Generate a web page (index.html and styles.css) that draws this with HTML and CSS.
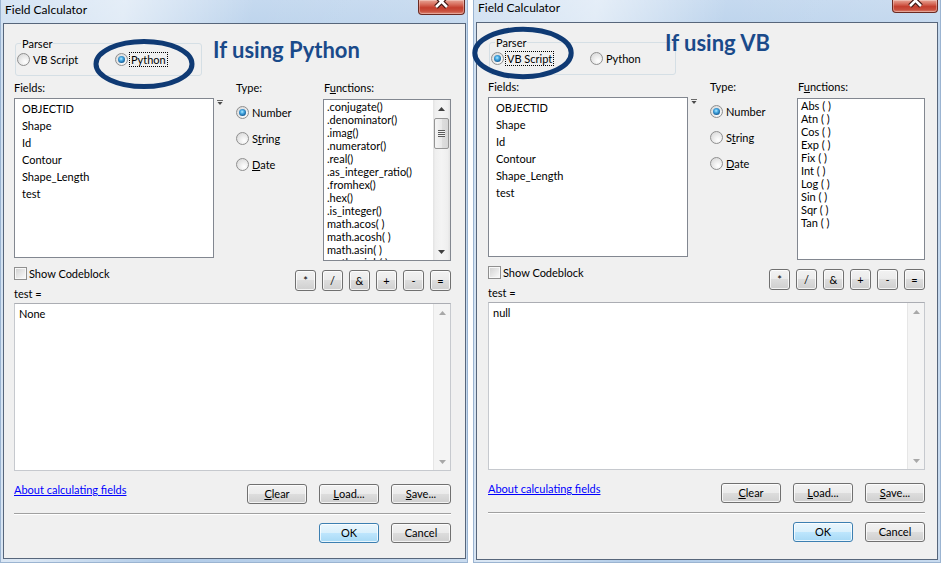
FILE: index.html
```html
<!DOCTYPE html>
<html lang="en">
<head>
<meta charset="utf-8">
<title>Field Calculator</title>
<link rel="stylesheet" href="styles.css">
</head>
<body>
<div class="desk">
  <section class="win win-left">
    <header class="titlebar">
      <span class="title">Field Calculator</span>
      <span class="close"><svg class="close-x" width="45" height="14" viewBox="0 0 45 14"><path class="x-out" d="M17 -4 L28 7 M28 -4 L17 7"/><path class="x-in" d="M17 -4 L28 7 M28 -4 L17 7"/></svg></span>
    </header>
    <div class="client">
      <div class="group">
        <span class="legend">Parser</span>
        <div class="group-opts">
          <span class="opt opt-first"><span class="radio"></span><span class="gtxt">VB Script</span></span>
          <span class="opt"><span class="radio on"></span><span class="gtxt focus">Python</span></span>
        </div>
      </div>
      <div class="cols labels">
        <span class="c-fields">Fields:</span>
        <span class="c-gap"></span>
        <span class="c-type">Type:</span>
        <span class="c-func">F<u>u</u>nctions:</span>
      </div>
      <div class="cols main">
        <ul class="list fields">
          <li>OBJECTID</li>
          <li>Shape</li>
          <li>Id</li>
          <li>Contour</li>
          <li>Shape_Length</li>
          <li>test</li>
        </ul>
        <span class="c-gap"><svg class="sort" width="6" height="6" viewBox="0 0 6 6"><path d="M0 0.5H6" stroke="#6a6a6a" stroke-width="1"/><path d="M0.5 2H5.5L3 5Z" fill="#4a4a4a"/></svg></span>
        <div class="c-type types">
          <span class="opt"><span class="radio on"></span><span>Number</span></span>
          <span class="opt"><span class="radio"></span><span>S<u>t</u>ring</span></span>
          <span class="opt"><span class="radio"></span><span><u>D</u>ate</span></span>
        </div>
        <div class="list funcs">
          <ul class="func-items">
            <li>.conjugate()</li>
            <li>.denominator()</li>
            <li>.imag()</li>
            <li>.numerator()</li>
            <li>.real()</li>
            <li>.as_integer_ratio()</li>
            <li>.fromhex()</li>
            <li>.hex()</li>
            <li>.is_integer()</li>
            <li>math.acos( )</li>
            <li>math.acosh( )</li>
            <li>math.asin( )</li>
            <li>math.asinh( )</li>
          </ul>
          <div class="sbar">
            <span class="sb-btn"><svg width="7" height="4" viewBox="0 0 7 4"><path d="M0 4H7L3.5 0Z" fill="#404040"/></svg></span>
            <span class="sb-track"><span class="thumb"><span class="grip"></span></span></span>
            <span class="sb-btn"><svg width="7" height="4" viewBox="0 0 7 4"><path d="M0 0H7L3.5 4Z" fill="#404040"/></svg></span>
          </div>
        </div>
      </div>
      <div class="cols mid">
        <div class="mid-left">
          <span class="check-row"><span class="check"></span><span>Show Codeblock</span></span>
          <span>test =</span>
        </div>
        <div class="ops">
          <span class="btn op">*</span>
          <span class="btn op">/</span>
          <span class="btn op">&amp;</span>
          <span class="btn op">+</span>
          <span class="btn op">-</span>
          <span class="btn op">=</span>
        </div>
      </div>
      <div class="expr">
        <div class="expr-text">None</div>
        <div class="sbar dis">
          <span class="sb-btn"><svg width="7" height="4" viewBox="0 0 7 4"><path d="M0 4H7L3.5 0Z" fill="#a8a8a8"/></svg></span>
          <span class="sb-track"></span>
          <span class="sb-btn"><svg width="7" height="4" viewBox="0 0 7 4"><path d="M0 0H7L3.5 4Z" fill="#a8a8a8"/></svg></span>
        </div>
      </div>
      <div class="cols actions">
        <a class="link" href="#">About calculating fields</a>
        <div class="btns">
          <span class="btn w60"><u>C</u>lear</span>
          <span class="btn w60"><u>L</u>oad...</span>
          <span class="btn w60"><u>S</u>ave...</span>
        </div>
      </div>
      <div class="sep"></div>
      <div class="btns final">
        <span class="btn w60 default">OK</span>
        <span class="btn w60">Cancel</span>
      </div>
    </div>
    <svg class="ring ring-l" width="110" height="60" viewBox="0 0 110 60"><ellipse cx="55" cy="30" rx="48" ry="22.6"/></svg>
    <div class="note note-l">If using Python</div>
  </section>

  <section class="win win-right">
    <header class="titlebar">
      <span class="title">Field Calculator</span>
      <span class="close"><svg class="close-x" width="44" height="12" viewBox="0 0 44 12"><path class="x-out" d="M17 -5 L28 6 M28 -5 L17 6"/><path class="x-in" d="M17 -5 L28 6 M28 -5 L17 6"/></svg></span>
    </header>
    <div class="client">
      <div class="group">
        <span class="legend">Parser</span>
        <div class="group-opts">
          <span class="opt opt-first"><span class="radio on"></span><span class="gtxt focus">VB Script</span></span>
          <span class="opt"><span class="radio"></span><span class="gtxt">Python</span></span>
        </div>
      </div>
      <div class="cols labels">
        <span class="c-fields">Fields:</span>
        <span class="c-gap"></span>
        <span class="c-type">Type:</span>
        <span class="c-func">F<u>u</u>nctions:</span>
      </div>
      <div class="cols main">
        <ul class="list fields">
          <li>OBJECTID</li>
          <li>Shape</li>
          <li>Id</li>
          <li>Contour</li>
          <li>Shape_Length</li>
          <li>test</li>
        </ul>
        <span class="c-gap"><svg class="sort" width="6" height="6" viewBox="0 0 6 6"><path d="M0 0.5H6" stroke="#6a6a6a" stroke-width="1"/><path d="M0.5 2H5.5L3 5Z" fill="#4a4a4a"/></svg></span>
        <div class="c-type types">
          <span class="opt"><span class="radio on"></span><span>Number</span></span>
          <span class="opt"><span class="radio"></span><span>S<u>t</u>ring</span></span>
          <span class="opt"><span class="radio"></span><span><u>D</u>ate</span></span>
        </div>
        <div class="list funcs">
          <ul class="func-items">
            <li>Abs ( )</li>
            <li>Atn ( )</li>
            <li>Cos ( )</li>
            <li>Exp ( )</li>
            <li>Fix ( )</li>
            <li>Int ( )</li>
            <li>Log ( )</li>
            <li>Sin ( )</li>
            <li>Sqr ( )</li>
            <li>Tan ( )</li>
          </ul>
        </div>
      </div>
      <div class="cols mid">
        <div class="mid-left">
          <span class="check-row"><span class="check"></span><span>Show Codeblock</span></span>
          <span>test =</span>
        </div>
        <div class="ops">
          <span class="btn op">*</span>
          <span class="btn op">/</span>
          <span class="btn op">&amp;</span>
          <span class="btn op">+</span>
          <span class="btn op">-</span>
          <span class="btn op">=</span>
        </div>
      </div>
      <div class="expr">
        <div class="expr-text">null</div>
        <div class="sbar dis">
          <span class="sb-btn"><svg width="7" height="4" viewBox="0 0 7 4"><path d="M0 4H7L3.5 0Z" fill="#a8a8a8"/></svg></span>
          <span class="sb-track"></span>
          <span class="sb-btn"><svg width="7" height="4" viewBox="0 0 7 4"><path d="M0 0H7L3.5 4Z" fill="#a8a8a8"/></svg></span>
        </div>
      </div>
      <div class="cols actions">
        <a class="link" href="#">About calculating fields</a>
        <div class="btns">
          <span class="btn w60"><u>C</u>lear</span>
          <span class="btn w60"><u>L</u>oad...</span>
          <span class="btn w60"><u>S</u>ave...</span>
        </div>
      </div>
      <div class="sep"></div>
      <div class="btns final">
        <span class="btn w60 default">OK</span>
        <span class="btn w60">Cancel</span>
      </div>
    </div>
    <svg class="ring ring-r" width="110" height="60" viewBox="0 0 110 60"><ellipse cx="55" cy="30" rx="48.2" ry="23.7"/></svg>
    <div class="note note-r">If using VB</div>
  </section>
</div>
</body>
</html>
```

FILE: styles.css
```css
* { box-sizing: border-box; }
html, body { margin: 0; padding: 0; }
body {
  width: 941px; height: 563px; overflow: hidden; background: #fff;
  font-family: Lato, "Open Sans", Arial, sans-serif; font-size: 11px; color: #000;
}
.desk { display: flex; gap: 5px; align-items: flex-start; }

.win {
  position: relative; flex: none; width: 468px; height: 563px;
  border: 1px solid #9bb4d1; border-top: none;
  background:
    linear-gradient(100deg, rgba(255,255,255,.30) 0, rgba(255,255,255,.55) 22%, rgba(255,255,255,0) 45%, rgba(255,255,255,.1) 80%, rgba(255,255,255,.3) 100%),
    linear-gradient(180deg, #c5d9ef 0, #bad2eb 40px, #b2cce8 100%);
}
.titlebar { display: flex; justify-content: space-between; align-items: flex-start; height: 23px; }
.win-right .titlebar { height: 22px; }
.title { padding-left: 4px; font-size: 12px; line-height: 20px; }
.win-right .title { line-height: 16px; }
.close {
  display: flex; justify-content: center; width: 47px; height: 15px; margin-right: 2px;
  border: 1px solid #6b2a22; border-top: none; border-radius: 0 0 4px 4px; overflow: hidden;
  background: linear-gradient(180deg, #e7a596 0, #d8705f 30%, #c43f2e 55%, #c9503e 80%, #dc8675 100%);
  box-shadow: inset 0 0 0 1px rgba(255,240,235,.35);
}
.win-right .close { width: 46px; height: 13px; }
.close-x { display: block; }
.x-out { stroke: #3f1510; stroke-width: 5; fill: none; }
.x-in { stroke: #fff; stroke-width: 2.6; fill: none; }

.client {
  display: flex; flex-direction: column; align-items: flex-start;
  width: 463px; height: 536px; margin-left: 2px; padding-left: 10px;
  border: 1px solid #57667b; background: #f0f0f0;
}
.win-right .client { width: 462px; height: 538px; padding-left: 11px; }

.group { margin: 19px 0 0 1px; width: 187px; height: 33px; border: 1px solid #d5dfe5; border-radius: 3px; }
.legend { display: block; width: max-content; margin: -7px 0 0 5px; padding: 0 1px; background: #f0f0f0; line-height: 14px; }
.group-opts { display: flex; align-items: center; height: 14px; margin: 1px 0 0 1px; }
.opt { display: flex; align-items: center; gap: 3px; line-height: 15px; }
.group .opt { gap: 1px; }
.opt-first { width: 98px; }
.win-right .opt-first { width: 99px; }
.gtxt { border: 1px solid transparent; padding: 0 1px; line-height: 13px; }
.focus { border: 1px dotted #000; }

.radio {
  flex: none; display: flex; align-items: center; justify-content: center;
  width: 13px; height: 13px; border: 1px solid #8f8f8f; border-radius: 50%;
  background: radial-gradient(circle at 65% 70%, #fff 0, #f0f0f0 35%, #d2d2d2 100%);
}
.radio.on::after {
  content: ""; width: 7px; height: 7px; border-radius: 50%;
  background: radial-gradient(circle at 45% 40%, #b4ecff 0, #4eaee6 30%, #1d6ba6 65%, #163e66 100%);
}

.cols { display: flex; width: 437px; }
.labels { margin-top: 4px; line-height: 15px; }
.c-fields { flex: none; width: 200px; }
.c-gap { flex: none; width: 22px; }
.c-type { flex: none; width: 87px; }
.c-func { padding-left: 1px; }

.main { margin-top: 3px; align-items: flex-start; }
.list { flex: none; margin: 0; border: 1px solid #828790; background: #fff; list-style: none; }
.fields { width: 200px; height: 160px; padding: 1px 0 0 7px; line-height: 17px; }
.sort { display: block; margin: 2px 0 0 3px; }
.types { display: flex; flex-direction: column; gap: 11px; padding-top: 7px; }
.funcs { display: flex; width: 128px; height: 162px; margin-top: 1px; overflow: hidden; }
.func-items { flex: 1; margin: 0; padding: 0 0 0 3px; list-style: none; line-height: 13px; overflow: hidden; }

.sbar {
  flex: none; display: flex; flex-direction: column; width: 17px;
  background: linear-gradient(90deg, #e3e3e3 0, #efefef 15%, #f4f4f4 50%, #efefef 85%, #e3e3e3 100%);
}
.sbar.dis { background: #f4f4f4; border-left: 1px solid #e6e6e6; }
.sb-btn { flex: none; display: flex; align-items: center; justify-content: center; height: 17px; }
.sb-btn svg { display: block; }
.sb-track { flex: 1; display: flex; flex-direction: column; align-items: center; }
.thumb {
  display: flex; align-items: center; justify-content: center;
  width: 15px; height: 31px; margin-top: 1px; border: 1px solid #959595; border-radius: 2px;
  background: linear-gradient(90deg, #f5f5f5 0, #e9e9e9 50%, #dedede 51%, #d6d6d6 100%);
}
.grip { width: 7px; height: 7px; background: repeating-linear-gradient(180deg, #5a5a5a 0 1px, #f2f2f2 1px 2px); }

.mid { margin-top: 5px; justify-content: space-between; align-items: flex-start; }
.mid-left { display: flex; flex-direction: column; gap: 5px; line-height: 15px; }
.check-row { display: flex; align-items: center; gap: 2px; }
.check {
  width: 13px; height: 13px; border: 1px solid #8f8f8f;
  background: linear-gradient(135deg, #cfcfcf, #f6f6f6 85%); box-shadow: inset 0 0 0 1px #f8f8f8;
}
.ops { display: flex; gap: 6px; margin-top: 4px; }

.btn {
  display: flex; align-items: center; justify-content: center; height: 20px;
  border: 1px solid #707070; border-radius: 3px; line-height: 18px;
  background: linear-gradient(180deg, #f2f2f2 0, #ebebeb 50%, #dddddd 50%, #cfcfcf 100%);
  box-shadow: inset 0 0 0 1px rgba(255,255,255,.75);
}
.op { width: 21px; height: 21px; }
.w60 { width: 60px; }
.default {
  border-color: #3c7fb1;
  background: linear-gradient(180deg, #eaf6fd 0, #d9f0fc 50%, #bee6fd 50%, #a7d9f5 100%);
}

.expr { display: flex; width: 437px; height: 168px; margin-top: 2px; border: 1px solid #c6c9ce; border-top-color: #abadb3; background: #fff; }
.expr-text { flex: 1; padding: 2px 0 0 4px; line-height: 15px; }

.actions { margin-top: 13px; justify-content: space-between; align-items: flex-start; }
.link { margin-top: -2px; color: #0000ff; text-decoration: underline; line-height: 15px; }
.btns { display: flex; gap: 12px; }
.sep { width: 437px; height: 2px; margin-top: 9px; border-top: 1px solid #a0a0a0; border-bottom: 1px solid #fff; }
.final { width: 437px; justify-content: flex-end; margin-top: 8px; }

.ring { position: absolute; overflow: visible; fill: none; stroke: #0f3a74; stroke-width: 5; }
.ring-l { left: 88px; top: 34px; }
.ring-r { left: -6px; top: 23px; }
.note {
  position: absolute; white-space: nowrap;
  font-family: Lato, sans-serif; font-weight: 700; font-size: 22px; line-height: 22px; color: #1a4a8a;
}
.note-l { left: 212px; top: 39px; }
.note-r { left: 191px; top: 32px; }
```
